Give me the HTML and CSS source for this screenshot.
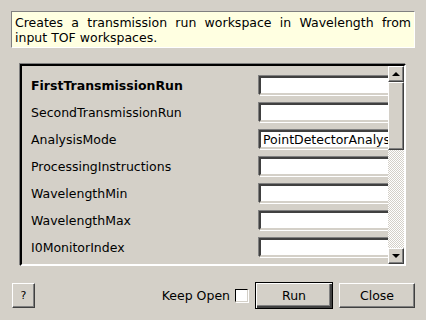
FILE: index.html
```html
<!DOCTYPE html>
<html lang="en">
  <head>
    <meta charset="UTF-8" />
    <title>Algorithm dialog</title>
    <link rel="stylesheet" href="styles.css">
  </head>
  <body>
    <div class="dialog">
      <!-- algorithm summary -->
      <div class="summary">
        <p>Creates a transmission run workspace in Wavelength from input TOF workspaces.</p>
      </div>
      <!-- property list with scroll bar -->
      <div class="props-frame">
        <div class="props">
          <div class="row">
            <span class="label required">FirstTransmissionRun</span>
            <input class="field" type="text" value="" />
          </div>
          <div class="row">
            <span class="label">SecondTransmissionRun</span>
            <input class="field" type="text" value="" />
          </div>
          <div class="row">
            <span class="label">AnalysisMode</span>
            <input class="field" type="text" value="PointDetectorAnalysis" />
          </div>
          <div class="row">
            <span class="label">ProcessingInstructions</span>
            <input class="field" type="text" value="" />
          </div>
          <div class="row">
            <span class="label">WavelengthMin</span>
            <input class="field" type="text" value="" />
          </div>
          <div class="row">
            <span class="label">WavelengthMax</span>
            <input class="field" type="text" value="" />
          </div>
          <div class="row">
            <span class="label">I0MonitorIndex</span>
            <input class="field" type="text" value="" />
          </div>
        </div>
        <!-- fake scroll bar -->
        <div class="scrollbar">
          <div class="sb-btn"><span class="arrow-up"></span></div>
          <div class="sb-thumb"></div>
          <div class="sb-track"></div>
          <div class="sb-btn"><span class="arrow-down"></span></div>
        </div>
      </div>
      <!-- buttons at the bottom -->
      <div class="footer">
        <button class="btn help">?</button>
        <div class="spacer"></div>
        <label class="keep-open">Keep Open <span class="checkbox"></span></label>
        <button class="btn run">Run</button>
        <button class="btn close">Close</button>
      </div>
    </div>
  </body>
</html>
```
FILE: styles.css
```css
/* reset */
* {
  margin: 0;
  padding: 0;
  box-sizing: border-box;
  font-family: "DejaVu Sans", "Liberation Sans", sans-serif;
}
body {
  background-color: #d4d0c8;
  color: #000;
  font-size: 12.5px;
}
.dialog {
  display: flex;
  flex-direction: column;
  padding: 11px 11px 0 11px;
  height: 320px;
}
/* summary box */
.summary {
  background-color: #ffffe1;
  border: 1px solid #808080;
  border-right-color: #fff;
  border-bottom-color: #fff;
  height: 37px;
  padding: 3px 3px 0 3px;
}
.summary p {
  text-align: justify;
  line-height: 15px;
}
/* properties frame */
.props-frame {
  display: flex;
  margin: 16px 9px 0 9px;
  height: 202px;
  border: 2px solid #000;
  border-right-color: #fff;
  border-bottom-color: #fff;
  box-shadow: -1px -1px 0 #808080;
}
.props {
  flex: 1;
  overflow: hidden;
  display: flex;
  flex-direction: column;
  gap: 8px;
  padding: 10px 0 0 9px;
}
.row {
  display: flex;
  align-items: center;
  height: 19px;
}
.label {
  width: 228px;
  flex-shrink: 0;
  white-space: nowrap;
}
.required {
  font-weight: bold;
}
.field {
  flex-shrink: 0;
  width: 150px;
  height: 19px;
  font-size: 12.5px;
  padding: 0 2px;
  background: #fff;
  border: 2px solid #000;
  border-top-color: #404040;
  border-left-color: #404040;
  border-right-color: #d4d0c8;
  border-bottom-color: #d4d0c8;
  box-shadow: -1px -1px 0 #808080, 1px 1px 0 #fff;
  outline: none;
}
/* scroll bar */
.scrollbar {
  width: 16px;
  display: flex;
  flex-direction: column;
}
.sb-btn,
.sb-thumb {
  background-color: #d4d0c8;
  border: 1px solid #404040;
  border-top-color: #fff;
  border-left-color: #fff;
  box-shadow: inset -1px -1px 0 #808080;
}
.sb-btn {
  height: 16px;
  display: flex;
  justify-content: center;
  align-items: center;
}
.sb-thumb {
  height: 68px;
}
.sb-track {
  flex: 1;
  background: repeating-conic-gradient(#fff 0 25%, #d4d0c8 0 50%) 0 0 / 2px 2px;
}
.arrow-up,
.arrow-down {
  width: 0;
  height: 0;
  border-left: 4px solid transparent;
  border-right: 4px solid transparent;
}
.arrow-up {
  border-bottom: 4px solid #000;
}
.arrow-down {
  border-top: 4px solid #000;
}
/* footer buttons */
.footer {
  display: flex;
  align-items: center;
  margin-top: 16px;
  padding-left: 1px;
}
.spacer {
  flex: 1;
}
.btn {
  background-color: #d4d0c8;
  font-size: 12.5px;
  height: 25px;
  border: 1px solid #404040;
  border-top-color: #fff;
  border-left-color: #fff;
  box-shadow: inset -1px -1px 0 #808080;
  color: #000;
}
.help {
  width: 23px;
  font-size: 11px;
}
.keep-open {
  display: flex;
  align-items: center;
  gap: 5px;
  margin-right: 7px;
}
.checkbox {
  display: inline-block;
  width: 13px;
  height: 13px;
  background: #fff;
  border: 1px solid #000;
  border-right-color: #d4d0c8;
  border-bottom-color: #d4d0c8;
  box-shadow: 1px 1px 0 #fff;
}
.run {
  width: 78px;
  height: 27px;
  border: 1px solid #000;
  box-shadow: inset 1px 1px 0 #fff, inset -2px -2px 0 #404040, inset -3px -3px 0 #808080;
  margin-right: 6px;
}
.close {
  width: 76px;
}
```
